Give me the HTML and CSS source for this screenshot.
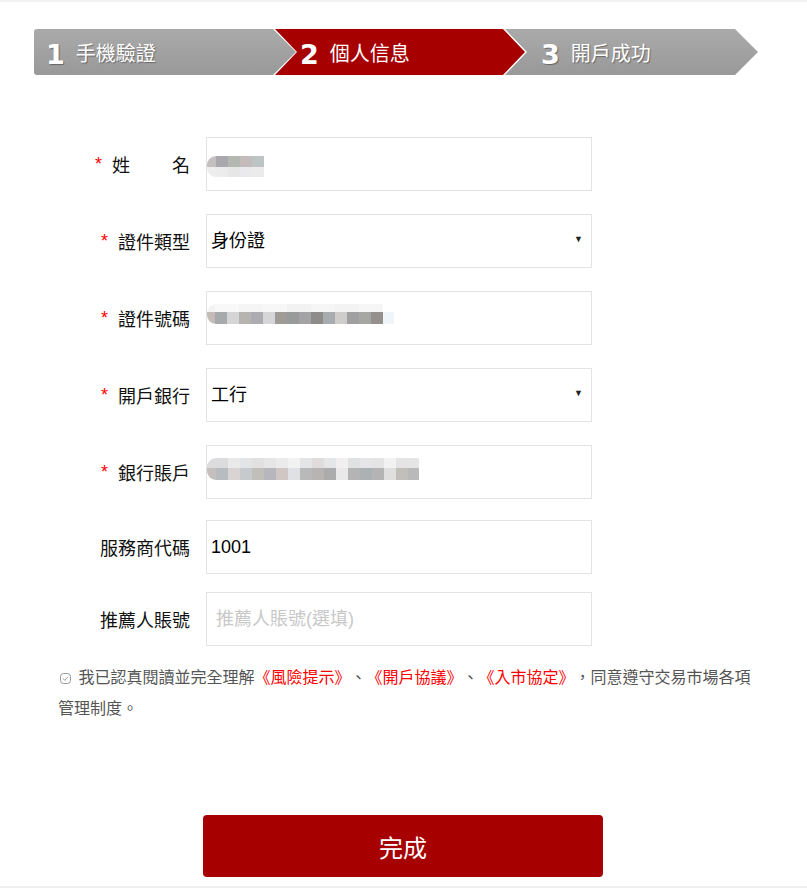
FILE: index.html
```html
<!doctype html>
<html><head>
	<title>個人信息</title>
	<meta charset="utf-8">
	<link rel="stylesheet" href="styles.css">
</head><body>
<div class="page">
	<div class="steps">
		<div class="step step-first"><span class="num">1</span><span class="name">手機驗證</span></div>
		<div class="step step-active"><span class="num">2</span><span class="name">個人信息</span></div>
		<div class="step step-last"><span class="num">3</span><span class="name">開戶成功</span></div>
	</div>

	<form class="form">
		<div class="row">
			<label class="label"><span class="req">*</span><span class="spread">姓名</span></label>
			<div class="field"><div class="mosaic mosaic-name"></div></div>
		</div>
		<div class="row">
			<label class="label"><span class="req">*</span>證件類型</label>
			<div class="select-wrap">
				<select class="field select"><option>身份證</option><option>護照</option></select>
			</div>
		</div>
		<div class="row">
			<label class="label"><span class="req">*</span>證件號碼</label>
			<div class="field"><div class="mosaic mosaic-id"></div></div>
		</div>
		<div class="row">
			<label class="label"><span class="req">*</span>開戶銀行</label>
			<div class="select-wrap">
				<select class="field select"><option>工行</option><option>建行</option></select>
			</div>
		</div>
		<div class="row row-tight">
			<label class="label"><span class="req">*</span>銀行賬戶</label>
			<div class="field"><div class="mosaic mosaic-account"></div></div>
		</div>
		<div class="row row-tighter">
			<label class="label">服務商代碼</label>
			<input class="field" type="text" value="1001">
		</div>
		<div class="row row-last">
			<label class="label">推薦人賬號</label>
			<input class="field field-hint" type="text" placeholder="推薦人賬號(選填)">
		</div>

		<p class="agree">
			<svg class="check" width="11" height="11" viewBox="0 0 11 11"><rect x="0.5" y="0.5" width="10" height="10" rx="3" fill="none" stroke="#999"/><path d="M3 5.6l1.8 1.8 3.3-3.6" fill="none" stroke="#999"/></svg>
			<span>我已認真閱讀並完全理解</span><a href="#">《風險提示》</a><span>、</span><a href="#">《開戶協議》</a><span>、</span><a href="#">《入市協定》</a><span>，同意遵守交易市場各項</span><br><span>管理制度。</span>
		</p>

		<button type="button" class="submit">完成</button>
	</form>
</div>
</body></html>
```

FILE: styles.css
```css
body {
	margin: 0;
	background: white;
	font-family: 'Liberation Sans', 'Noto Sans CJK TC', sans-serif;
	color: #222;
}

.page {
	border-top: 2px solid #f2f2f2;
	border-bottom: 2px solid #f0f0f0;
	padding-bottom: 9px;
}

/* step bar */

.steps {
	display: flex;
	height: 46px;
	margin: 27px 0 0 34px;
}

.step {
	box-sizing: border-box;
	flex: none;
	display: flex;
	align-items: center;
	height: 46px;
	color: white;
	background: linear-gradient(#aaaaaa, #999999);
	text-shadow: 1px 1px 1px rgba(0, 0, 0, 0.35);
}

.step-first {
	width: 262px;
	padding-left: 12px;
	border-radius: 3px 0 0 3px;
	clip-path: polygon(0 0, 239px 0, 262px 23px, 239px 46px, 0 46px);
}

.step-active {
	width: 250px;
	margin-left: -21px;
	padding-left: 25px;
	background: #a60000;
	text-shadow: none;
	clip-path: polygon(0 0, 228px 0, 250px 23px, 228px 46px, 0 46px, 22px 23px);
}

.step-last {
	width: 253px;
	margin-left: -20px;
	padding-left: 36px;
	clip-path: polygon(0 0, 230px 0, 253px 23px, 230px 46px, 0 46px, 22px 23px);
}

.step .num {
	font: bold 27px 'DejaVu Sans', sans-serif;
	margin: 5px 11px 0 0;
}

.step .name {
	font-size: 20px;
}

/* form */

.form {
	margin: 62px 0 0 58px;
}

.row {
	display: flex;
	align-items: center;
	gap: 16px;
	margin-bottom: 23px;
}

.row-tight {
	margin-bottom: 21px;
}

.row-tighter {
	margin-bottom: 18px;
}

.row-last {
	margin-bottom: 16px;
}

.label {
	width: 132px;
	display: flex;
	justify-content: flex-end;
	align-items: center;
	font-size: 18px;
	color: #111;
}

.req {
	color: red;
	margin-right: 10px;
}

.spread {
	display: inline-block;
	width: 78px;
	text-align: justify;
	text-align-last: justify;
}

.field {
	box-sizing: border-box;
	width: 386px;
	height: 54px;
	border: 1px solid #e3e3e3;
	background: white;
	padding: 0 4px;
	font: 18px 'Liberation Sans', 'Noto Sans CJK TC', sans-serif;
	color: #000;
	outline: none;
}

div.field {
	padding: 0;
}

.field-hint {
	padding-left: 9px;
}

.field-hint::placeholder {
	color: #c8c8c8;
}

.select-wrap {
	position: relative;
}

.select {
	appearance: none;
	-webkit-appearance: none;
	border-radius: 0;
}

.select-wrap::after {
	content: '\25BC';
	position: absolute;
	right: 9px;
	top: 50%;
	margin-top: -7px;
	font-size: 9px;
	color: #222;
	pointer-events: none;
}

/* blurred values */

.mosaic {
	border-radius: 9px 0 0 9px;
	background-repeat: no-repeat;
	background-position: top, bottom;
}

.mosaic-name {
	width: 57px;
	height: 21px;
	margin-top: 18px;
	background-size: 100% 11px, 100% 10px;
	background-image:
		linear-gradient(90deg, #c5c0c0 0 9px, #a9a9ad 9px 21px, #b4b8b2 21px 33px, #c4bcbc 33px 45px, #bcc4c4 45px 57px),
		linear-gradient(90deg, #eeeded 0 9px, #ececec 9px 21px, #e6e6e6 21px 33px, #e9e9ee 33px 45px, #ebebeb 45px 57px);
}

.mosaic-id {
	width: 187px;
	height: 20px;
	margin-top: 12px;
	background-size: 100% 8px, 100% 12px;
	background-image:
		linear-gradient(90deg, #f3f3f3 0 8px, #f8f8f8 8px 32px, #f5f5f5 32px 56px, #f7f7f7 56px 80px, #f2f2f2 80px 104px, #f6f6f6 104px 128px, #f3f3f3 128px 152px, #f6f6f6 152px 176px, transparent 176px),
		linear-gradient(90deg, #c5bcb9 0 8px, #a6aaad 8px 20px, #d5d5d5 20px 32px, #b7b3b0 32px 44px, #adadb1 44px 56px, #d6d6d8 56px 68px, #a09b97 68px 80px, #999b9b 80px 92px, #a3a3a5 92px 104px, #8e8c8a 104px 116px, #a9acaf 116px 128px, #cfcdcb 128px 140px, #a0a0a2 140px 152px, #a6a6a2 152px 164px, #958f8e 164px 176px, #f0f5fa 176px 187px);
}

.mosaic-account {
	width: 212px;
	height: 22px;
	margin-top: 12px;
	background-size: 100% 10px, 100% 12px;
	background-image:
		linear-gradient(90deg, #dcdcde 0 21px, #e9e9e9 21px 33px, #e3e4e6 33px 45px, #e1e1e1 45px 57px, #e6e6e6 57px 69px, #ebebeb 69px 81px, #f2f2f2 81px 93px, #e4e5e7 93px 105px, #dfdcdb 105px 117px, #e5e6e8 117px 129px, #f1efef 129px 141px, #e0e1e3 141px 153px, #e6e6e8 153px 165px, #e4e4e4 165px 177px, #f2f2f2 177px 189px, #e4e4e4 189px 201px, #e5e5e5 201px 212px),
		linear-gradient(90deg, #c5bfbd 0 9px, #b7bcc0 9px 21px, #d9d4d3 21px 33px, #c6cacd 33px 45px, #c0bfba 45px 57px, #b8b6bd 57px 69px, #d0c6c4 69px 81px, #dfe1e4 81px 93px, #b9b9b9 93px 105px, #b7b4b3 105px 117px, #acacac 117px 129px, #e9e9e9 129px 141px, #b4b4b4 141px 153px, #acb1b4 153px 165px, #b4b4b4 165px 177px, #e0dfdf 177px 189px, #c0bfba 189px 201px, #b9b9b9 201px 212px);
}

/* agreement */

.agree {
	width: 700px;
	margin: 0;
	font-size: 16px;
	line-height: 31px;
	color: #555;
	text-spacing-trim: space-all;
}

.agree a {
	color: red;
	text-decoration: none;
}

.check {
	margin: 0 3px 0 2px;
	vertical-align: -1px;
}

.submit {
	display: block;
	width: 400px;
	height: 62px;
	margin: 91px 0 0 145px;
	border: none;
	border-radius: 4px;
	background: #a60000;
	color: white;
	font: 24px 'Liberation Sans', 'Noto Sans CJK TC', sans-serif;
}
```
